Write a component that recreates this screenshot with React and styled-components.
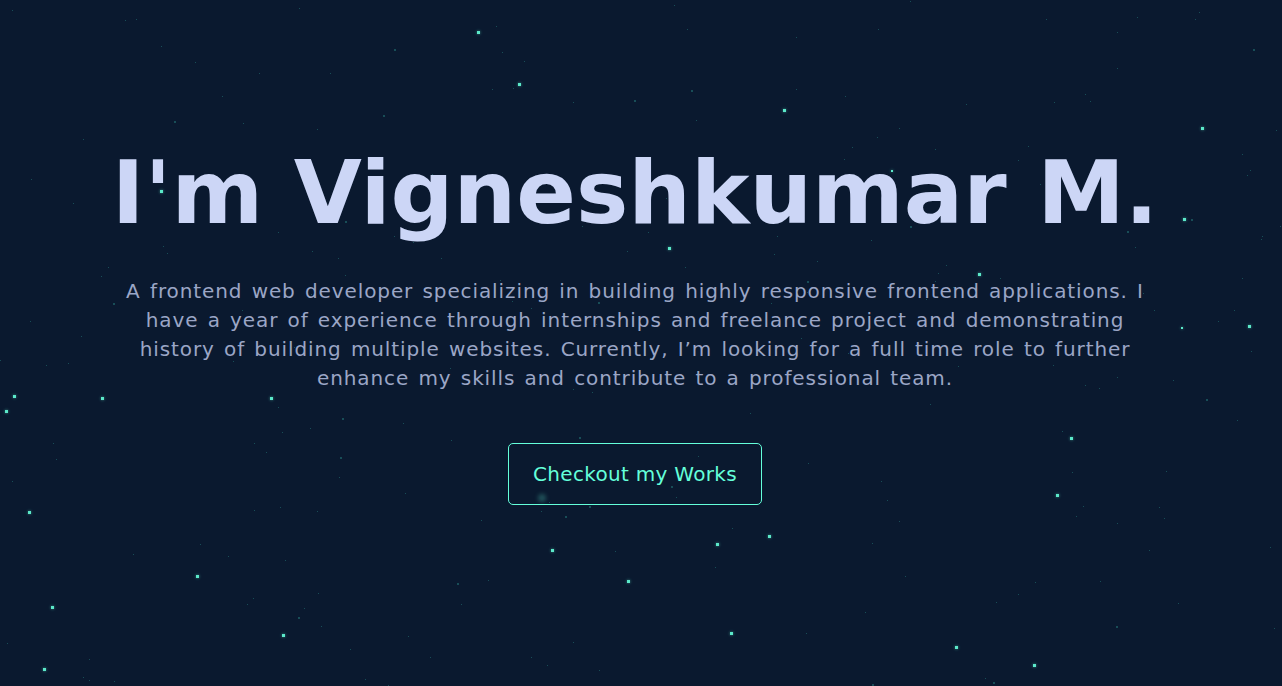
import React from "react";
import styled, { createGlobalStyle } from "styled-components";

const GlobalStyle = createGlobalStyle`
  * { box-sizing: border-box; }
  html, body, #root { margin: 0; padding: 0; height: 100%; }
  body {
    background: #0a192f;
    font-family: "DejaVu Sans", "Noto Sans", sans-serif;
    overflow: hidden;
  }
`;

// bright stars read off the reference
const bright = [
  [477, 31, 3], [518, 83, 3], [783, 109, 3], [1201, 127, 3], [1183, 218, 3],
  [1248, 325, 3], [13, 395, 3], [5, 410, 3], [101, 397, 3], [270, 397, 3],
  [1070, 437, 3], [1056, 494, 3], [28, 511, 3], [551, 549, 3], [716, 543, 3],
  [768, 535, 3], [627, 580, 3], [196, 575, 3], [51, 606, 3], [282, 634, 3],
  [730, 632, 3], [955, 646, 3], [43, 668, 3], [1033, 664, 3], [668, 247, 3],
  [978, 273, 3], [1181, 327, 2], [160, 190, 3], [891, 170, 2],
];

function seeded(seed) {
  let s = seed;
  return () => {
    s = (s * 16807) % 2147483647;
    return (s - 1) / 2147483646;
  };
}

const rand = seeded(42);
const faint = Array.from({ length: 230 }, () => [
  Math.round(rand() * 1282),
  Math.round(rand() * 686),
  rand() > 0.85 ? 2 : 1,
]);

export default function App() {
  return (
    <Page>
      <GlobalStyle />
      <Sky>
        {faint.map(([x, y, s], i) => (
          <Star key={"f" + i} $faint style={{ left: x, top: y, width: s, height: s }} />
        ))}
        {bright.map(([x, y, s], i) => (
          <Star key={"b" + i} style={{ left: x, top: y, width: s, height: s }} />
        ))}
        <Glow style={{ left: 538, top: 494 }} />
      </Sky>
      <Hero>
        <Title>I'm Vigneshkumar M.</Title>
        <Intro>
          A frontend web developer specializing in building highly responsive frontend applications. I
          <br />
          have a year of experience through internships and freelance project and demonstrating
          <br />
          history of building multiple websites. Currently, I’m looking for a full time role to further
          <br />
          enhance my skills and contribute to a professional team.
        </Intro>
        <WorksButton>Checkout my Works</WorksButton>
      </Hero>
    </Page>
  );
}

const Page = styled.div`
  position: relative;
  width: 100%;
  height: 686px;
  background: #0a192f;
  overflow: hidden;
`;

const Sky = styled.div`
  position: absolute;
  inset: 0;
  pointer-events: none;
`;

const Star = styled.span`
  position: absolute;
  background: ${(p) => (p.$faint ? "#2a8f8a" : "#64ffda")};
  opacity: ${(p) => (p.$faint ? 0.45 : 0.9)};
  box-shadow: ${(p) => (p.$faint ? "none" : "0 0 3px rgba(100,255,218,0.6)")};
`;

const Glow = styled.span`
  position: absolute;
  width: 8px;
  height: 8px;
  border-radius: 50%;
  background: rgba(100, 255, 218, 0.25);
  filter: blur(2px);
`;

const Hero = styled.main`
  position: relative;
  display: flex;
  flex-direction: column;
  align-items: center;
  padding: 138px 12px 0 0;
`;

const Title = styled.h1`
  margin: 0;
  color: #ccd6f6;
  font-size: 88px;
  font-weight: 700;
  line-height: 110px;
`;

const Intro = styled.p`
  margin: 29px 0 0;
  color: #9ba6c6;
  font-size: 20px;
  line-height: 29px;
  letter-spacing: 0.9px;
  word-spacing: 2px;
  text-align: center;
  white-space: nowrap;
`;

const WorksButton = styled.button`
  margin-top: 50px;
  width: 254px;
  height: 62px;
  background: transparent;
  border: 1px solid #64ffda;
  border-radius: 5px;
  color: #64ffda;
  font-family: inherit;
  font-size: 20px;
  letter-spacing: 0.3px;
  cursor: pointer;
`;
